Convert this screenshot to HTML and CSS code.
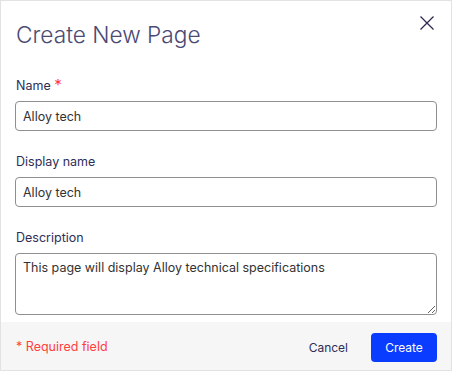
FILE: index.html
```html
<!DOCTYPE html>
<html>
<head>
<meta charset="utf-8">
<link rel="stylesheet" href="styles.css">
</head>
<body>
<div class="dialog">
  <div class="header">
    <h1 class="title">Create New Page</h1>
    <button class="close" aria-label="Close">
      <svg width="16" height="16" viewBox="0 0 16 16"><path d="M1.5 1.5L14.5 14.5M14.5 1.5L1.5 14.5" stroke="#2b2b52" stroke-width="1.3" fill="none"/></svg>
    </button>
  </div>
  <div class="body">
    <div class="field">
      <label class="label">Name <span class="req">*</span></label>
      <input class="input" type="text" value="Alloy tech">
    </div>
    <div class="field">
      <label class="label">Display name</label>
      <input class="input" type="text" value="Alloy tech">
    </div>
    <div class="field">
      <label class="label">Description</label>
      <textarea class="input textarea">This page will display Alloy technical specifications</textarea>
    </div>
  </div>
  <div class="footer">
    <span class="required">* Required field</span>
    <div class="actions">
      <button class="btn-cancel">Cancel</button>
      <button class="btn-create">Create</button>
    </div>
  </div>
</div>
</body>
</html>
```
FILE: styles.css
```css
* { box-sizing: border-box; }
html, body { margin: 0; padding: 0; background: #fff; }
body { font-family: Inter, "Noto Sans", sans-serif; }
.dialog {
  width: 452px;
  height: 371px;
  border: 1px solid #e2e2e2;
  display: flex;
  flex-direction: column;
  background: #fff;
}
.header {
  display: flex;
  justify-content: space-between;
  align-items: flex-start;
  padding: 20px 16px 0 15px;
}
.title {
  margin: 0;
  font-size: 22.7px;
  font-weight: 300;
  line-height: 28px;
  color: #4a4a74;
  letter-spacing: 0;
}
.close {
  border: 0;
  background: none;
  padding: 0;
  margin-top: -6px;
  width: 16px;
  height: 16px;
  cursor: pointer;
}
.close svg { display: block; }
.body {
  flex: 1;
  padding: 28px 14px 0 14px;
  display: flex;
  flex-direction: column;
  gap: 23px;
}
.field { display: flex; flex-direction: column; gap: 7px; }
.label {
  font-size: 12.5px;
  line-height: 16px;
  color: #2e2e57;
  padding-left: 1px;
}
.req { color: #ff3b3b; font-size: 15px; }
.input {
  width: 100%;
  height: 30px;
  border: 1px solid #8f8f8f;
  border-radius: 4px;
  padding: 0 7px;
  font-family: Inter, "Noto Sans", sans-serif;
  font-size: 12.5px;
  color: #333;
  background: #fff;
  outline: none;
}
.textarea {
  height: 62px;
  padding: 5px 7px;
  resize: vertical;
  line-height: 18px;
}
.footer {
  height: 48px;
  background: #f6f6f6;
  display: flex;
  align-items: center;
  justify-content: space-between;
  padding: 0 14px 0 15px;
}
.required { color: #ff4040; font-size: 12.5px; }
.actions { display: flex; align-items: center; gap: 23px; }
.btn-cancel {
  border: 0;
  background: none;
  font-family: Inter, "Noto Sans", sans-serif;
  font-size: 12px;
  color: #2e2e57;
  padding: 0;
  margin-top: 2px;
}
.btn-create {
  border: 0;
  background: #0a3cff;
  color: #fff;
  border-radius: 4px;
  width: 66px;
  height: 29px;
  font-family: Inter, "Noto Sans", sans-serif;
  font-size: 12px;
  margin-top: 2px;
}
```
